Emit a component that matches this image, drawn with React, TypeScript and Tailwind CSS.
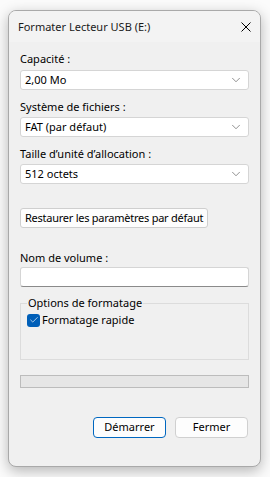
import { ChevronDown, Check } from "lucide-react";

const font = { fontFamily: '"Noto Sans", "Segoe UI", sans-serif' };

function Select({ value }: { value: string }) {
  return (
    <div className="flex h-[20px] items-center justify-between rounded-[3px] border border-[#d5d5d5] bg-white pl-[4px] pr-[5px] text-[11px] text-black">
      <span>{value}</span>
      <ChevronDown size={14} strokeWidth={1.1} className="text-[#555]" />
    </div>
  );
}

export default function App() {
  return (
    <div className="h-[477px] w-[270px] bg-[#fbfbfb] pl-[8px] pt-[10px]" style={font}>
      <div className="flex h-[457px] w-[253px] flex-col overflow-hidden rounded-[8px] border border-[#a9a9a9] bg-[#f0f0f0] shadow-[0_4px_14px_rgba(0,0,0,0.28)]">
        {/* title bar */}
        <div className="flex h-[31px] shrink-0 items-center justify-between bg-[#f3f3f3] pl-[9px] pr-[9px] pt-[1px]">
          <span className="text-[11px] text-[#1a1a1a]">Formater Lecteur USB (E:)</span>
          <svg width="10" height="10" viewBox="0 0 10 10" className="text-black">
            <path d="M0.5 0.5L9.5 9.5M9.5 0.5L0.5 9.5" stroke="currentColor" strokeWidth="1" />
          </svg>
        </div>

        <div className="flex flex-1 flex-col px-[11px] pt-[9px] text-[11px] text-black">
          <label className="leading-[16px]">Capacité :</label>
          <div className="mt-[3px]">
            <Select value="2,00 Mo" />
          </div>
          <label className="mt-[9px] leading-[16px]">Système de fichiers :</label>
          <div className="mt-[2px]">
            <Select value="FAT (par défaut)" />
          </div>
          <label className="mt-[9px] leading-[16px]">Taille d’unité d’allocation :</label>
          <div className="mt-[2px]">
            <Select value="512 octets" />
          </div>

          <button className="mt-[24px] flex h-[20px] w-fit items-center rounded-[3px] border border-[#cfcfcf] bg-[#fdfdfd] px-[4px] text-[11px] tracking-[-0.25px]">
            Restaurer les paramètres par défaut
          </button>

          <label className="mt-[22px] leading-[16px]">Nom de volume :</label>
          <div className="mt-[1px] h-[20px] rounded-[3px] border border-[#d5d5d5] border-b-[#8a8a8a] bg-white" />

          <fieldset className="mt-[9px] h-[64px] border border-[#dcdcdc] px-[6px] pt-0">
            <legend className="px-[1px] leading-[14px]">Options de formatage</legend>
            <label className="mt-[2px] flex items-center gap-[2px]">
              <span className="flex h-[13px] w-[13px] items-center justify-center rounded-[3px] bg-[#005fb8]">
                <Check size={10} strokeWidth={1.6} className="text-white" />
              </span>
              Formatage rapide
            </label>
          </fieldset>

          <div className="mt-[15px] h-[13px] border border-[#bcbcbc] bg-[#e6e6e6]" />

          <div className="mt-[29px] flex justify-end gap-[9px] pr-[1px]">
            <button className="h-[21px] w-[73px] rounded-[4px] border border-[#0067c0] bg-[#fdfdfd] text-[11px]">
              Démarrer
            </button>
            <button className="h-[21px] w-[73px] rounded-[4px] border border-[#d0d0d0] bg-[#fdfdfd] text-[11px]">
              Fermer
            </button>
          </div>
        </div>
      </div>
    </div>
  );
}
